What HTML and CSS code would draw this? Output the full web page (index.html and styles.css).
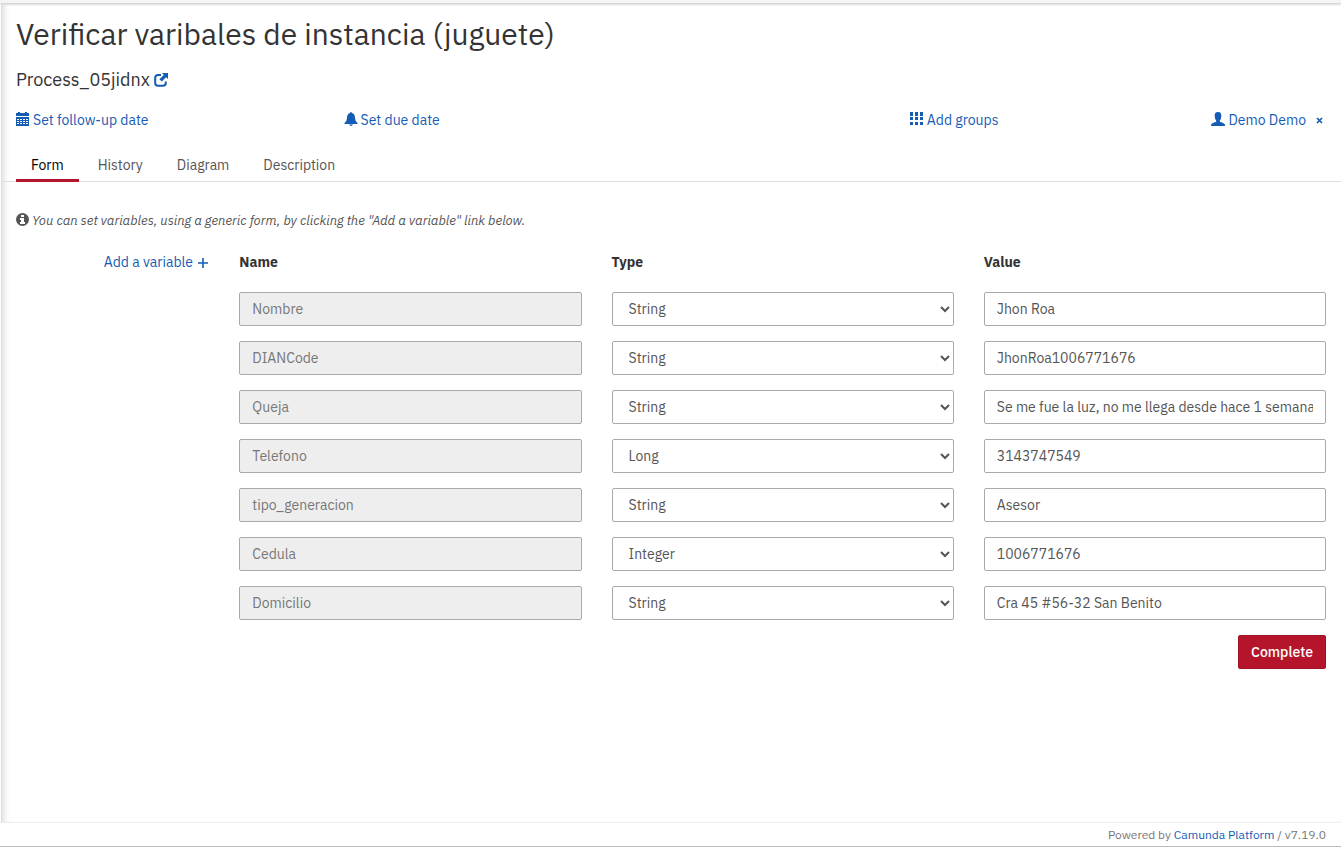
FILE: index.html
```
<!DOCTYPE html>
<html lang="en">
<head>
<meta charset="utf-8">
<meta name="viewport" content="width=device-width, initial-scale=1">
<title>Camunda Tasklist</title>
<link rel="stylesheet" href="styles.css">
</head>
<body>
<div class="topbar"></div>
<main class="task">
  <header class="task-header">
    <h1 class="task-title">Verificar varibales de instancia (juguete)</h1>
    <h2 class="process-name">Process_05jidnx
      <a href="#" aria-label="Open process"><svg class="icon" viewBox="0 0 14 14"><path d="M7 2H4Q1.200 2 1.200 4.800V10Q1.200 12.800 4 12.800H9Q11.800 12.800 11.800 10V8.500" fill="none" stroke="currentColor" stroke-width="2"/><path d="M8 0H14V6L12 4.200 7.800 8.600 5.400 6.200 9.800 2Z" fill="currentColor"/></svg></a>
    </h2>
    <div class="meta">
      <a class="meta-link" href="#"><svg class="icon" viewBox="0 0 14 14" fill="currentColor"><path d="M0 1H2V0H4V1H9V0H11V1H13V4H0ZM0 5H13V14H0Z"/><path d="M1 7.500H12M1 9.500H12M1 11.500H12" stroke="#fff" stroke-dasharray="2 1"/></svg>Set follow-up date</a>
      <a class="meta-link" href="#"><svg class="icon" viewBox="0 0 14 14" fill="currentColor"><path d="M6 1Q7 -.8 8 1C10.500 1.700 11 4 11 6Q11 9 13.500 11V12H.5V11Q3 9 3 6C3 4 3.500 1.700 6 1ZM5 12.500H9Q8 14 7 14T5 12.500Z"/></svg>Set due date</a>
      <a class="meta-link meta-end" href="#"><svg class="icon" viewBox="0 0 14 14" fill="currentColor"><path d="M0 0H3V4H0ZM5 0H8V4H5ZM10 0H13V4H10ZM0 5H3V8H0ZM5 5H8V8H5ZM10 5H13V8H10ZM0 10H3V13H0ZM5 10H8V13H5ZM10 10H13V13H10Z"/></svg>Add groups</a>
      <div class="meta-end assignee">
        <a class="meta-link" href="#"><svg class="icon" viewBox="0 0 14 14" fill="currentColor"><path d="M7 0C9.500 0 10.500 1.500 10.300 4Q10.300 7 8.800 8.500V9.700Q13.700 11 14 13V14H0V13Q.3 11 5.200 9.700V8.500Q3.700 7 3.700 4C3.500 1.500 4.500 0 7 0Z"/></svg>Demo Demo</a>
        <button class="unassign" type="button" aria-label="Remove assignee"><svg viewBox="0 0 7 7"><path d="M1 1L6 6M6 1L1 6" stroke="currentColor" stroke-width="1.700"/></svg></button>
      </div>
    </div>
  </header>
  <nav class="tabs">
    <a class="tab active" href="#">Form</a>
    <a class="tab" href="#">History</a>
    <a class="tab" href="#">Diagram</a>
    <a class="tab" href="#">Description</a>
  </nav>
  <form class="task-form">
    <p class="hint"><svg class="icon" viewBox="0 0 14 14"><circle cx="6.500" cy="6.500" r="6.500" fill="currentColor"/><path d="M5 2H8V4H5ZM4 5H8V9H9V11H4V9H5V7H4Z" fill="#fff"/></svg>You can set variables, using a generic form, by clicking the "Add a variable" link below.</p>
    <div class="grid heads">
      <a class="add" href="#">Add a variable <svg viewBox="0 0 10 10"><path d="M0 5H10M5 0V10" stroke="currentColor" stroke-width="1.600"/></svg></a>
      <span class="head">Name</span><span class="head">Type</span><span class="head">Value</span>
    </div>
    <div class="grid row"><input class="field name" aria-label="Name" value="Nombre" disabled><select class="field" aria-label="Type"><option>String</option></select><input class="field" aria-label="Value" value="Jhon Roa"></div>
    <div class="grid row"><input class="field name" aria-label="Name" value="DIANCode" disabled><select class="field" aria-label="Type"><option>String</option></select><input class="field" aria-label="Value" value="JhonRoa1006771676"></div>
    <div class="grid row"><input class="field name" aria-label="Name" value="Queja" disabled><select class="field" aria-label="Type"><option>String</option></select><input class="field" aria-label="Value" value="Se me fue la luz, no me llega desde hace 1 semana"></div>
    <div class="grid row"><input class="field name" aria-label="Name" value="Telefono" disabled><select class="field" aria-label="Type"><option>Long</option></select><input class="field" aria-label="Value" value="3143747549"></div>
    <div class="grid row"><input class="field name" aria-label="Name" value="tipo_generacion" disabled><select class="field" aria-label="Type"><option>String</option></select><input class="field" aria-label="Value" value="Asesor"></div>
    <div class="grid row"><input class="field name" aria-label="Name" value="Cedula" disabled><select class="field" aria-label="Type"><option>Integer</option></select><input class="field" aria-label="Value" value="1006771676"></div>
    <div class="grid row"><input class="field name" aria-label="Name" value="Domicilio" disabled><select class="field" aria-label="Type"><option>String</option></select><input class="field" aria-label="Value" value="Cra 45 #56-32 San Benito"></div>
    <div class="actions"><button class="complete" type="submit">Complete</button></div>
  </form>
</main>
<footer class="footer">Powered by <a href="#">Camunda Platform</a> / v7.19.0</footer>
</body>
</html>
```
FILE: styles.css
```
* { box-sizing: border-box; }
body {
  display: flex;
  flex-direction: column;
  min-height: 100vh;
  margin: 0;
  background: #fff;
  color: #555;
  font: 14px/20px "IBM Plex Sans", Roboto, sans-serif;
}
a { color: #155cb5; text-decoration: none; }
.topbar {
  height: 3px;
  background: #f5f5f5;
  box-shadow: 0 1px 3px #bbb;
}
.task {
  flex: 1;
  margin-left: 1px;
  border-left: 1px solid #ddd;
  box-shadow: inset 6px 0 6px -4px #ddd;
}
.task-header { padding: 11px 15px 0 14px; }
.task-title {
  margin: 0;
  color: #333;
  font-size: 30px;
  font-weight: 400;
  line-height: 40px;
}
.process-name {
  margin: 14px 0 0;
  color: #333;
  font-size: 18px;
  font-weight: 400;
  line-height: 24px;
}
.icon {
  width: 14px;
  height: 14px;
  flex: none;
}
.process-name .icon { vertical-align: -1px; }
.meta {
  display: grid;
  grid-template-columns: repeat(4, 1fr);
  margin-top: 18px;
}
.meta-link { display: flex; gap: 3px; }
.meta-link .icon { margin-top: 2px; }
.meta-end { justify-content: flex-end; }
.assignee { display: flex; gap: 10px; }
.unassign {
  display: flex;
  align-items: center;
  margin: 0;
  padding: 0 3px 0 0;
  border: 0;
  background: none;
  color: #155cb5;
}
.unassign svg { width: 7px; height: 7px; }
.tabs {
  display: flex;
  gap: 4px;
  margin-top: 18px;
  padding-left: 14px;
  border-bottom: 1px solid #ddd;
}
.tab {
  margin-bottom: -1px;
  padding: 7px 15px 4px;
  border-bottom: 3px solid transparent;
  color: #555;
}
.tab.active { border-color: #b5152b; color: #000; }
.task-form { padding: 29px 15px 20px 14px; }
.hint {
  display: flex;
  gap: 2px;
  margin: 0;
  font-size: 13px;
  font-style: italic;
}
.hint .icon { margin-top: 2px; }
.grid {
  display: grid;
  grid-template-columns: calc((100% + 30px) / 6 - 30px) repeat(3, 1fr);
  gap: 30px;
}
.heads { margin-top: 21px; margin-bottom: 20px; }
.add { padding-right: 1px; text-align: right; }
.add svg { width: 10px; height: 10px; margin-left: 2px; vertical-align: -1px; }
.head { color: #333; font-weight: 700; }
.row { margin-bottom: 15px; }
.field {
  width: 100%;
  min-width: 0;
  height: 34px;
  margin: 0;
  padding: 6px 12px;
  border: 1px solid #aaa;
  border-radius: 2px;
  background: #fff;
  color: #555;
  font: inherit;
}
select.field { padding-right: 0; }
.name {
  grid-column: 2;
  background: #eee;
  color: #777;
}
.actions { display: flex; justify-content: flex-end; }
.complete {
  height: 34px;
  padding: 0 12px;
  border: 1px solid #a01225;
  border-radius: 2px;
  background: #b5152b;
  color: #fff;
  font: inherit;
  font-weight: 500;
}
.footer {
  padding: 2px 15px 1px;
  border-top: 1px solid #eee;
  border-bottom: 1px solid #bbb;
  color: #777;
  font-size: 12px;
  text-align: right;
}
```
